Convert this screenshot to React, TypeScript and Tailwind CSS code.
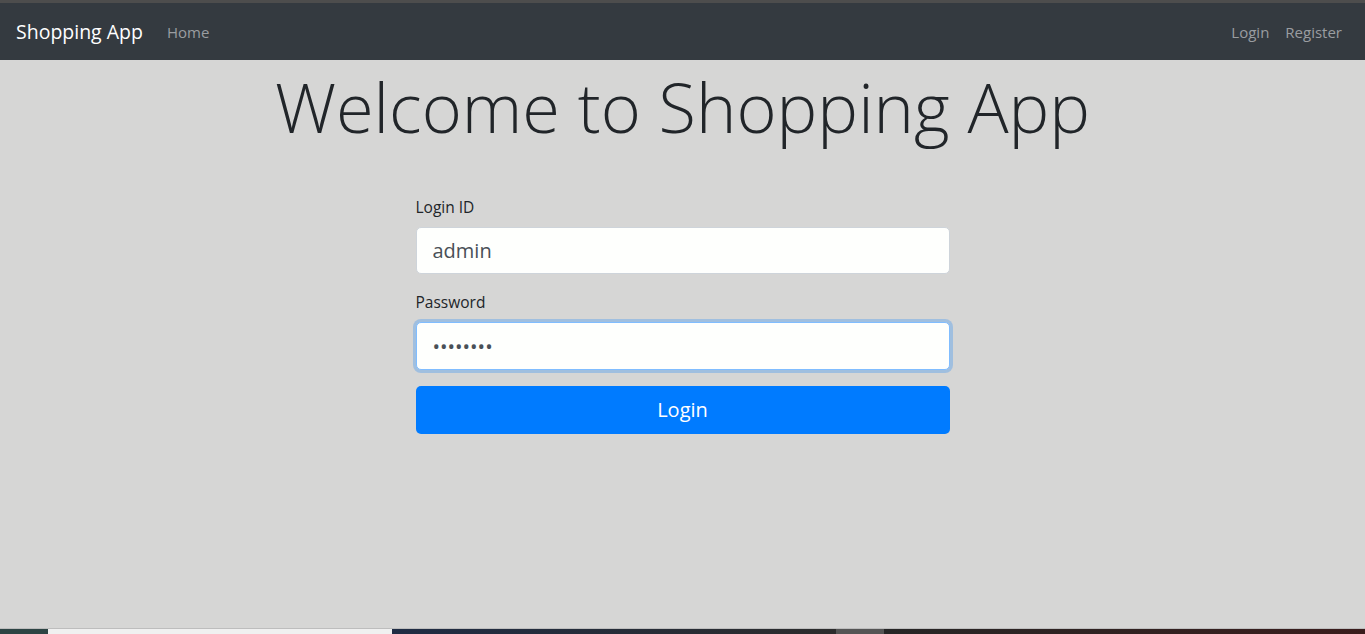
import React from "react";

const font = { fontFamily: '"Open Sans", "Noto Sans", "Liberation Sans", sans-serif' };

function Navbar() {
  return (
    <nav className="h-[57px] bg-[#343a40] flex items-center pl-4 pr-[15px] pt-[1px]">
      <span className="text-[19.5px] text-white mr-4 leading-[30px]">Shopping App</span>
      <a className="px-2 text-[15px] text-[#9a9da0]">Home</a>
      <div className="ml-auto flex items-center">
        <a className="px-2 text-[15px] text-[#9a9da0]">Login</a>
        <a className="px-2 text-[15px] text-[#9a9da0]">Register</a>
      </div>
    </nav>
  );
}

function LoginForm() {
  return (
    <form className="w-[534px] mx-auto mt-[47px]">
      <div className="mb-4">
        <label className="block text-[15.5px] text-[#212529] mb-2 leading-[24px]">Login ID</label>
        <input
          defaultValue="admin"
          className="w-full h-[47px] bg-[#fefffd] border border-[#ced4da] rounded-[5px] px-4 text-[20px] text-[#495057] outline-none"
          style={font}
        />
      </div>
      <div className="mb-4">
        <label className="block text-[15.5px] text-[#212529] mb-2 leading-[24px]">Password</label>
        <input
          type="password"
          defaultValue="password"
          className="w-full h-[48px] bg-[#fefffd] border border-[#80bdff] rounded-[5px] px-4 text-[20px] text-[#495057] outline-none shadow-[0_0_0_3px_rgba(0,123,255,0.25)]"
          style={font}
        />
      </div>
      <button
        type="button"
        className="w-full h-[48px] bg-[#007bff] text-white text-[20px] rounded-[5px]"
      >
        Login
      </button>
    </form>
  );
}

function Taskbar() {
  return (
    <div className="h-[6px] flex border-t border-[#bdbdbd]">
      <div className="w-[48px] bg-[#2d4444]" />
      <div className="w-[344px] bg-[#f0f0f0]" />
      <div className="w-[444px] bg-gradient-to-r from-[#1f2c44] to-[#2c2c2c]" />
      <div className="w-[48px] bg-[#555555]" />
      <div className="flex-1 bg-gradient-to-r from-[#262626] to-[#3a1c1c]" />
    </div>
  );
}

export default function App() {
  return (
    <div className="h-[634px] flex flex-col bg-[#d6d6d5]" style={font}>
      <div className="h-[3px] bg-[#4d4d4d]" />
      <Navbar />
      <main className="flex-1">
        <h1 className="text-center text-[68.5px] font-light leading-[82px] text-[#212529] mt-[6px]">
          Welcome to Shopping App
        </h1>
        <LoginForm />
      </main>
      <Taskbar />
    </div>
  );
}
